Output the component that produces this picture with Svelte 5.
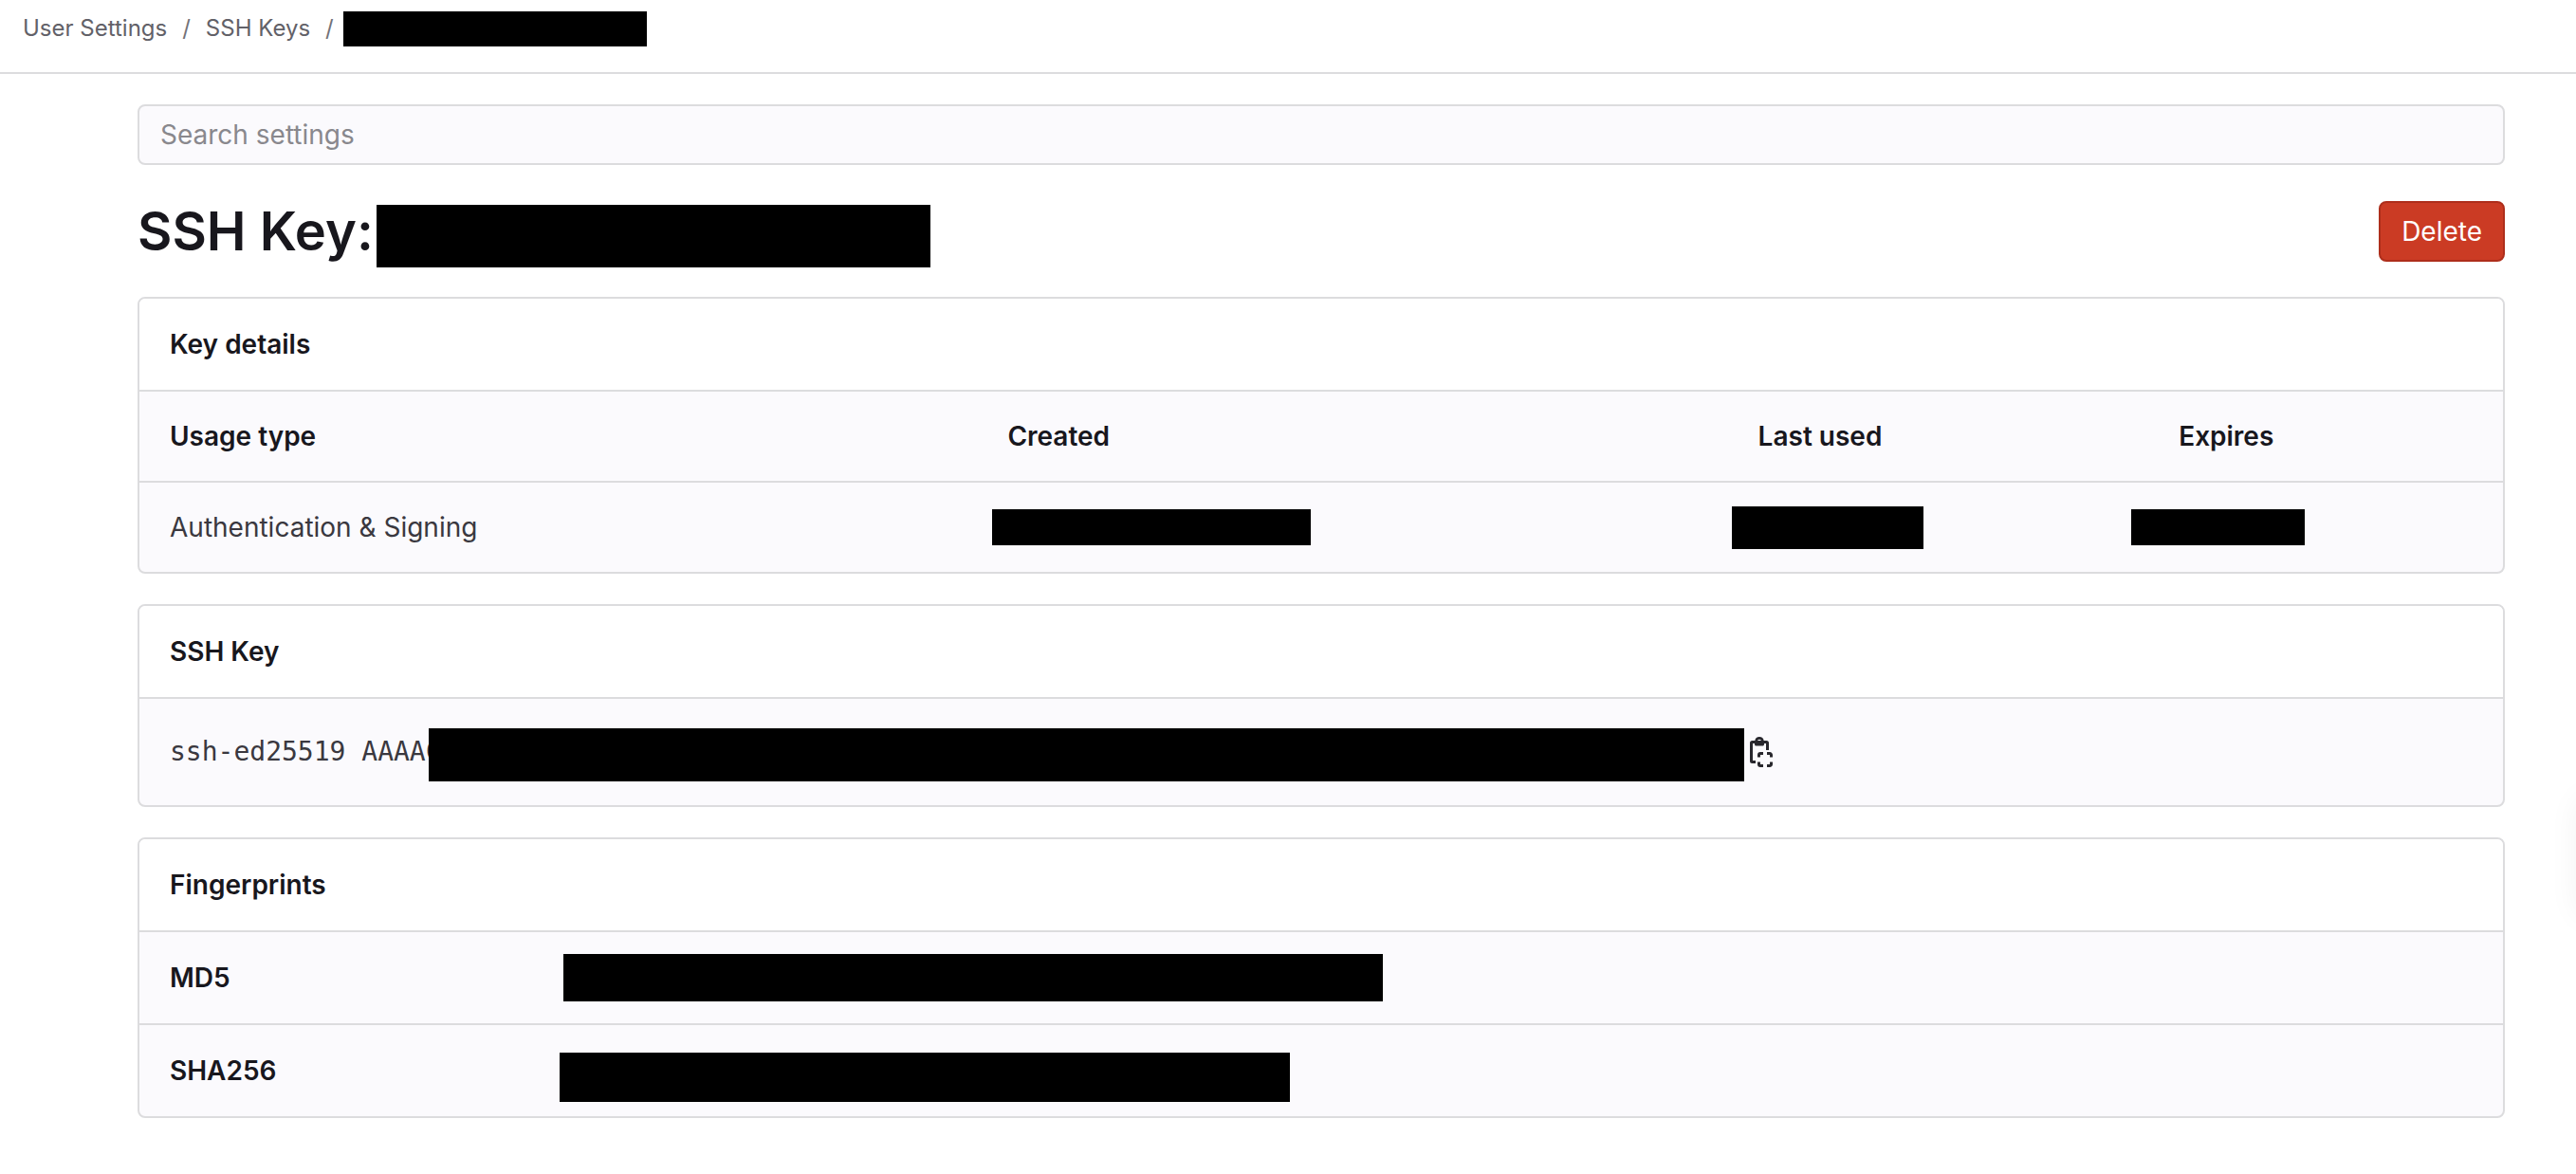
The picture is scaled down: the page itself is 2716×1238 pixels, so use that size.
<script>
  const fingerprints = [
    { name: 'MD5', mask: 'md5' },
    { name: 'SHA256', mask: 'sha' },
  ];
</script>

<div class="page">
  <header class="topbar">
    <nav aria-label="Breadcrumb">
      <ol class="crumbs">
        <li><a href="#settings">User Settings</a></li>
        <li class="sep" aria-hidden="true">/</li>
        <li><a href="#keys">SSH Keys</a></li>
        <li class="sep" aria-hidden="true">/</li>
        <li class="mask crumb-mask"></li>
      </ol>
    </nav>
  </header>

  <main>
    <input class="search" type="search" placeholder="Search settings" aria-label="Search settings" />

    <div class="title-row">
      <h1>SSH Key:</h1>
      <span class="mask title-mask"></span>
      <button class="delete" type="button">Delete</button>
    </div>

    <section class="card">
      <h2>Key details</h2>
      <table class="details">
        <thead>
          <tr>
            <th class="usage" scope="col">Usage type</th>
            <th class="created" scope="col">Created</th>
            <th class="used" scope="col">Last used</th>
            <th class="expires" scope="col">Expires</th>
          </tr>
        </thead>
        <tbody>
          <tr>
            <td>Authentication &amp; Signing</td>
            <td class="created"><span class="mask created-mask"></span></td>
            <td class="used"><span class="mask used-mask"></span></td>
            <td class="expires"><span class="mask expires-mask"></span></td>
          </tr>
        </tbody>
      </table>
    </section>

    <section class="card">
      <h2>SSH Key</h2>
      <div class="key-row">
        <code>ssh-ed25519 AAAAC</code>
        <span class="mask key-mask"></span>
        <button class="copy" type="button" aria-label="Copy SSH key">
          <svg viewBox="0 0 16 16" fill="none" stroke="currentColor" stroke-width="1.5" aria-hidden="true">
            <path d="M5 13.25H3.25a.5.5 0 0 1-.5-.5v-9.5a.5.5 0 0 1 .5-.5h7.5a.5.5 0 0 1 .5.5V7" />
            <path
              d="M7 0a2.4 2.4 0 0 0-2.35 2H4.5v2c0 .4.35.75.75.75h3.5c.4 0 .75-.35.75-.75V2h-.15A2.4 2.4 0 0 0 7 0Zm0 1.400a1.050 1.050 0 1 1 0 2.100 1.050 1.050 0 0 1 0-2.100Z"
              fill="currentColor"
              fill-rule="evenodd"
              stroke="none"
            />
            <path
              d="M6.750 10.750V9.500a.75.75 0 0 1 .75-.75H9M11 8.750h1.500a.75.75 0 0 1 .75.75v1.250M13.250 13.250v1.250a.75.75 0 0 1-.75.75H11M9 15.250H7.500a.75.75 0 0 1-.75-.75v-1.250"
            />
          </svg>
        </button>
      </div>
    </section>

    <section class="card">
      <h2>Fingerprints</h2>
      <table class="prints">
        <tbody>
          {#each fingerprints as f}
            <tr>
              <th scope="row">{f.name}</th>
              <td class={f.mask}><span class="mask {f.mask}-mask"></span></td>
            </tr>
          {/each}
        </tbody>
      </table>
    </section>
  </main>
  <div class="edge-shadow"></div>
</div>

<style>
  :global(body) {
    background: #fff;
  }
  .page,
  .page * {
    box-sizing: border-box;
  }
  .page {
    position: relative;
    overflow: hidden;
    min-height: 100vh;
    font-family: Inter, 'Liberation Sans', sans-serif;
    font-size: 28px;
    line-height: 40px;
    color: #3a383f;
  }
  .mask {
    display: block;
    flex: none;
    background: #000;
  }
  .topbar {
    height: 78px;
    padding: 12px 24px 0;
    border-bottom: 2px solid #dcdcde;
  }
  .crumbs {
    display: flex;
    margin: 0;
    padding: 0;
    list-style: none;
    font-size: 24px;
    line-height: 36px;
    color: #737278;
  }
  .crumbs a {
    color: #626168;
    text-decoration: none;
  }
  .sep {
    padding: 0 16px;
  }
  .sep:nth-child(4) {
    padding-right: 10px;
  }
  .crumb-mask {
    width: 320px;
    height: 37px;
  }
  main {
    padding: 32px 75px 56px 145px;
  }
  .search {
    display: block;
    width: 100%;
    height: 64px;
    padding: 0 22px;
    border: 2px solid #dcdcde;
    border-radius: 8px;
    background: #fbfafd;
    font: inherit;
    color: #3a383f;
    appearance: none;
  }
  .search::placeholder {
    color: #89888d;
    opacity: 1;
  }
  .title-row {
    display: flex;
    align-items: flex-start;
    padding: 38px 0 31px;
  }
  h1 {
    margin: 0;
    width: 252px;
    font-size: 56px;
    line-height: 64px;
    font-weight: 600;
    white-space: nowrap;
    color: #18171d;
  }
  .title-mask {
    width: 584px;
    height: 66px;
    margin-top: 4px;
  }
  .delete {
    height: 64px;
    margin-left: auto;
    padding: 0 22px;
    border: 2px solid #ae2e1b;
    border-radius: 8px;
    background: #cb3b24;
    color: #fff;
    font: inherit;
  }
  .card {
    margin-bottom: 32px;
    border: 2px solid #dcdcde;
    border-radius: 8px;
    overflow: hidden;
    background: #fbfafd;
  }
  h2 {
    margin: 0;
    padding: 28px 32px;
    background: #fff;
    font-size: 28px;
    line-height: 40px;
    font-weight: 600;
    color: #18171d;
  }
  table {
    width: 100%;
    border-spacing: 0;
    table-layout: fixed;
  }
  th,
  td {
    padding: 0 32px;
    border-top: 2px solid #dcdcde;
    text-align: left;
    font-weight: 400;
  }
  th {
    font-weight: 600;
    color: #18171d;
  }
  .details th,
  .details td {
    height: 96px;
  }
  .usage {
    width: 35.45%;
  }
  th.created {
    width: 31.75%;
  }
  th.used {
    width: 17.8%;
  }
  td.created {
    padding-left: 16px;
  }
  td.used {
    padding-left: 4px;
  }
  td.expires {
    padding-left: 0;
  }
  .created-mask {
    width: 336px;
    height: 38px;
  }
  .used-mask {
    width: 202px;
    height: 45px;
  }
  .expires-mask {
    width: 183px;
    height: 38px;
    margin-left: -18px;
  }
  .key-row {
    display: flex;
    align-items: center;
    height: 114px;
    padding: 0 32px;
    border-top: 2px solid #dcdcde;
  }
  code {
    width: 273px;
    white-space: nowrap;
    font-family: 'DejaVu Sans Mono', 'Liberation Mono', monospace;
    font-size: 28px;
  }
  .key-mask {
    position: relative;
    width: 1387px;
    height: 56px;
    margin-top: 6px;
  }
  .copy {
    margin-left: 2px;
    padding: 0;
    border: 0;
    background: none;
    color: #28272d;
  }
  .copy svg {
    display: block;
    width: 32px;
    height: 32px;
  }
  .prints th,
  .prints td {
    height: 98px;
  }
  .prints th {
    width: 411px;
  }
  .prints td {
    padding-left: 36px;
  }
  .prints td.sha {
    padding-top: 14px;
    padding-left: 32px;
  }
  .md5-mask {
    width: 864px;
    height: 50px;
  }
  .sha-mask {
    width: 770px;
    height: 52px;
  }
  .edge-shadow {
    position: absolute;
    top: 840px;
    left: 100%;
    width: 80px;
    height: 128px;
    border-radius: 16px;
    box-shadow: 0 0 32px rgba(0, 0, 0, 0.05);
  }
</style>
